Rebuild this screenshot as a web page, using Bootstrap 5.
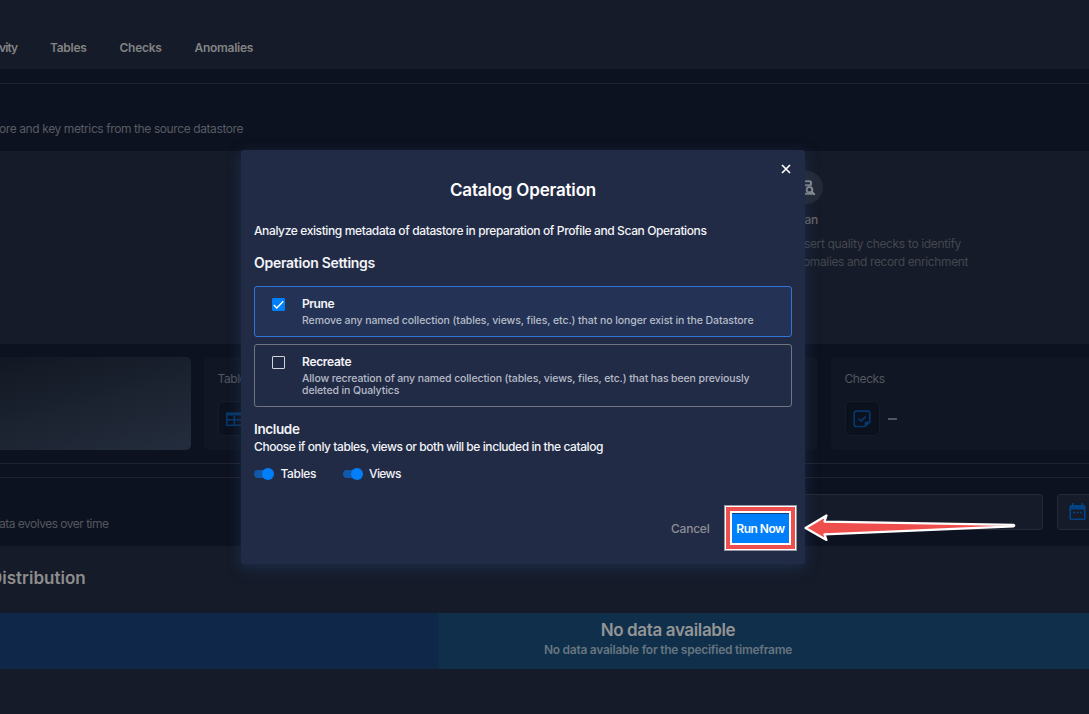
<!DOCTYPE html>
<html lang="en">
<head>
<meta charset="utf-8">
<meta name="viewport" content="width=device-width, initial-scale=1">
<title>Catalog Operation</title>
<link href="https://cdn.jsdelivr.net/npm/bootstrap@5.3.0/dist/css/bootstrap.min.css" rel="stylesheet">
<style>
  body { height: 714px; background: #0d1220; font: 400 12px/16px Inter, "Liberation Sans", sans-serif; color: #4f525a; white-space: nowrap; }
  svg { display: block; }
  .surface { background: #151b29; }
  .topnav { height: 69px; padding-top: 40px; color: #838384; font-weight: 600; letter-spacing: -.28px; }
  .topnav a { color: inherit; text-decoration: none; }
  .topnav .first { width: 51px; margin-left: -1px; letter-spacing: -.9px; }
  .intro { height: 67px; margin-top: 14px; border-top: 1px solid #1e2230; padding-top: 37px; margin-bottom: 1px; letter-spacing: -.4px; color: #585b63; }
  .intro div { margin-left: -1px; }
  .steps { height: 193px; }
  .scan { padding: 20px 0 0 790px; color: #44474e; }
  .scan-icon { width: 33px; height: 33px; background: #252a36; color: #8d9095; }
  .scan-title { margin: 7px 0 7px; line-height: 17px; color: #67686c; font-weight: 500; letter-spacing: -.2px; }
  .scan p { line-height: 18px; }
  .stats { height: 93px; margin: 13px 0; gap: 13px; }
  .stat { border-radius: 5px; background: #101624; padding: 14px 13.5px; letter-spacing: -.4px; color: #54575e; }
  .stat-lead { width: 191px; background: linear-gradient(165deg, #131924 5%, #232c3c 95%); }
  .stat-mid { width: 614px; }
  .tile { width: 35px; height: 35px; border: 1px solid #171c29; border-radius: 6px; background: #0c111e; color: #07386c; margin-top: 14px; }
  .dash { width: 9px; height: 2px; background: #53565e; margin: 14px 0 0 8px; }
  .rule { height: 15px; border-top: 1px solid #20232f; border-bottom: 1px solid #20232f; }
  .trend { height: 68px; padding-top: 16px; }
  .trend-text { width: 501px; padding-top: 22px; margin-left: -1px; letter-spacing: -.51px; color: #54575f; }
  .field { height: 36px; width: 543px; border: 1px solid #252a36; border-radius: 3px; background: #151b29; }
  .field-date { width: 60px; margin-left: 14px; padding: 8px 11px; color: #034486; }
  .dist h2 { font-size: 17px; line-height: 22px; font-weight: 600; color: #8d8d8d; margin: 0 0 0 -10px; padding-top: 21px; height: 67px; }
  .dist { height: 168px; }
  .band-a { width: 439px; height: 56px; background: #0f2849; border-right: 1px solid #102a42; }
  .band-b { height: 56px; background: #102f4a; padding: 6px 0 0; }
  .band-text { width: 458px; }
  .band-title { font-size: 17px; line-height: 22px; font-weight: 600; letter-spacing: -.37px; color: #939495; }
  .band-sub { font-weight: 600; letter-spacing: -.26px; color: #667580; line-height: 17px; }
  .dialog { left: 241px; top: 150px; width: 564px; height: 414px; border-radius: 3px; background: #222b46; color: #f2f4f7; padding: 30px 13px 0; box-shadow: 0 4px 14px rgba(35, 62, 100, .55); }
  .dialog-close { left: 539.5px; top: 13.5px; }
  .dialog h1 { font-size: 17px; line-height: 20px; font-weight: 600; letter-spacing: -.18px; margin-bottom: 23px; color: #fff; }
  .about { font-weight: 500; letter-spacing: -.383px; margin-bottom: 14px; }
  .dialog h2 { font-size: 14px; line-height: 19px; font-weight: 600; letter-spacing: -.277px; margin-bottom: 14px; }
  .choice { border: 1px solid #70757f; border-radius: 3px; padding: 9px 17px 9.5px; gap: 17px; margin-bottom: 7px; height: 63px; }
  .choice.on { background: #243355; border-color: #3274da; height: 51px; }
  .tick { width: 13px; height: 13px; border: 1px solid #d0d3da; border-radius: 1px; margin-top: 2px; }
  .on .tick { background: #007ffb; border-color: #007ffb; }
  .choice-title { font-weight: 600; letter-spacing: -.3px; }
  .on .choice-title { letter-spacing: -.45px; }
  .choice-text { font-size: 10.5px; line-height: 12px; font-weight: 500; letter-spacing: -.077px; color: #b6bbc7; margin-top: 2.5px; }
  .choice-text.alt { letter-spacing: -.109px; }
  .include { margin-top: 13px; font-weight: 500; letter-spacing: -.424px; }
  .include h3 { font-size: 13.5px; line-height: 19px; font-weight: 600; letter-spacing: -.36px; margin: 0; }
  .toggle { width: 20px; height: 12px; }
  .toggles { margin-top: 11px; letter-spacing: -.35px; }
  .toggles .item { width: 89px; gap: 6.5px; }
  .toggles .item + .item { gap: 6px; letter-spacing: -.6px; }
  .actions { margin-top: 23px; }
  .cancel { color: #8b8f98; font-weight: 500; letter-spacing: -.22px; margin: 1px 14.5px 0 0; }
  .run-frame { width: 73px; height: 46px; margin-right: -5px; border: 1px solid #9298a5; background: #fff; padding: 1px; }
  .run-frame .ring { background: #ee4f4d; padding: 4px; }
  .run-frame .inner { background: #fff; padding: 2px; }
  .run { border: 0; border-radius: 0; padding: 0; background: #007ffb; color: #fff; font-size: 12px; line-height: 16px; font-weight: 600; letter-spacing: -.5px; border-top: 1px solid #173f7d; }
  .run:hover { background: #007ffb; color: #fff; }
  .pointer { left: 799.5px; top: 508px; }
</style>
</head>
<body class="position-relative overflow-hidden">
  <nav class="topnav surface d-flex">
    <a class="first" href="#">vity</a>
    <a style="width:69.5px" href="#">Tables</a>
    <a style="width:75px" href="#">Checks</a>
    <a href="#">Anomalies</a>
  </nav>
  <div class="intro"><div>ore and key metrics from the source datastore</div></div>

  <section class="steps surface">
    <div class="scan">
      <div class="scan-icon rounded-circle d-flex align-items-center justify-content-center">
        <svg width="18" height="16" viewBox="0 0 18 16" fill="none" stroke="currentColor" stroke-width="2"><path d="M2 1.200h9.500a1.500 1.500 0 0 1 1.500 1.500v1a1.500 1.500 0 0 1-1.500 1.500H2zM2 9.500h4M2 13.500h5"/><circle cx="11.500" cy="9.800" r="2.800"/><path d="M6.500 13.800h8M13.500 11.800l3.300 3"/></svg>
      </div>
      <div class="scan-title">Scan</div>
      <p class="mb-0" style="letter-spacing:-.337px">Assert quality checks to identify</p>
      <p class="mb-0" style="letter-spacing:-.383px">anomalies and record enrichment</p>
    </div>
  </section>

  <section class="stats d-flex">
    <div class="stat stat-lead flex-shrink-0 rounded-start-0"></div>
    <div class="stat stat-mid flex-shrink-0">
      Tables
      <div class="tile d-flex align-items-center justify-content-center">
        <svg width="18" height="14" viewBox="0 0 18 14" fill="none" stroke="currentColor" stroke-width="1.6"><path d="M.8 1.5h16.4v11.700H.8zM1 7.700h16M8.300 4v9"/><path d="M0 2h18" stroke-width="3"/></svg>
      </div>
    </div>
    <div class="stat flex-grow-1 rounded-end-0">
      Checks
      <div class="d-flex align-items-center">
        <div class="tile d-flex align-items-center justify-content-center">
          <svg width="18" height="18" viewBox="0 0 18 18" fill="none" stroke="currentColor" stroke-width="1.7"><path d="M12 16.5H3A1.8 1.8 0 0 1 1.200 15V3A1.800 1.800 0 0 1 3 1.200h12A1.800 1.800 0 0 1 16.800 3v9zM5.500 8.500l2.600 2.600 4.400-4.400"/><path d="M11.500 17v-3.500a2 2 0 0 1 2-2H17z" fill="currentColor" stroke="none"/></svg>
        </div>
        <div class="dash"></div>
      </div>
    </div>
  </section>

  <div class="rule"></div>
  <section class="trend d-flex">
    <div class="trend-text flex-shrink-0">ata evolves over time</div>
    <div class="d-flex">
      <div class="field flex-shrink-0"></div>
      <div class="field field-date flex-shrink-0">
        <svg width="17" height="18" viewBox="0 0 17 18"><path fill="currentColor" fill-rule="evenodd" d="M3 0h1.500v2h8V0H14v2h1a1.600 1.600 0 0 1 1.600 1.600V15.500A1.600 1.600 0 0 1 15 17H2A1.600 1.600 0 0 1 .4 15.400V3.600A1.600 1.600 0 0 1 2 2h1zM2 6.500v9h13v-9z"/><path stroke="currentColor" stroke-width="1.600" stroke-dasharray="2 1.500" d="M4 9.500h9"/></svg>
      </div>
    </div>
  </section>

  <section class="dist surface">
    <h2>Distribution</h2>
    <div class="d-flex">
      <div class="band-a flex-shrink-0"></div>
      <div class="band-b flex-grow-1 text-center">
        <div class="band-text">
          <div class="band-title">No data available</div>
          <div class="band-sub">No data available for the specified timeframe</div>
        </div>
      </div>
    </div>
  </section>

  <div class="dialog position-absolute" role="dialog" aria-label="Catalog Operation">
    <svg class="dialog-close position-absolute" width="10" height="10" viewBox="0 0 10 10" stroke="#fff" stroke-width="1.700"><path d="M1 1l8 8M9 1l-8 8"/></svg>
    <h1 class="text-center">Catalog Operation</h1>
    <p class="about">Analyze existing metadata of datastore in preparation of Profile and Scan Operations</p>
    <h2>Operation Settings</h2>
    <div class="choice on d-flex">
      <div class="tick flex-shrink-0"><svg width="11" height="11" viewBox="0 0 11 11" fill="none" stroke="#fff" stroke-width="1.400"><path d="M.8 6l3 3L10.300 2.200"/></svg></div>
      <div>
        <div class="choice-title">Prune</div>
        <div class="choice-text">Remove any named collection (tables, views, files, etc.) that no longer exist in the Datastore</div>
      </div>
    </div>
    <div class="choice d-flex">
      <div class="tick flex-shrink-0"></div>
      <div>
        <div class="choice-title">Recreate</div>
        <div class="choice-text alt">Allow recreation of any named collection (tables, views, files, etc.) that has been previously<br>deleted in Qualytics</div>
      </div>
    </div>
    <div class="include">
      <h3>Include</h3>
      <div>Choose if only tables, views or both will be included in the catalog</div>
      <div class="toggles d-flex">
        <div class="item d-flex align-items-center"><svg class="toggle" viewBox="0 0 20 12"><rect y="2" width="16" height="8" rx="4" fill="#1159a8"/><circle cx="14" cy="6" r="6" fill="#007ffb"/></svg>Tables</div>
        <div class="item d-flex align-items-center"><svg class="toggle" viewBox="0 0 20 12"><rect y="2" width="16" height="8" rx="4" fill="#1159a8"/><circle cx="14" cy="6" r="6" fill="#007ffb"/></svg>Views</div>
      </div>
    </div>
    <div class="actions d-flex align-items-center justify-content-end">
      <span class="cancel">Cancel</span>
      <div class="run-frame"><div class="ring h-100"><div class="inner h-100"><button class="btn run w-100 h-100 d-block">Run Now</button></div></div></div>
    </div>
  </div>

  <svg class="pointer position-absolute" width="222" height="40" viewBox="0 0 222 40"><path d="M5.500 20L26.500 7.500L24.500 13.700L213.500 16.800Q215 17.500 213.500 18.300L24.500 26.300L26.500 32Z" fill="#ee4f4d" stroke="#fff" stroke-width="2.200" stroke-linejoin="round"/></svg>
  <script src="https://cdn.jsdelivr.net/npm/bootstrap@5.3.0/dist/js/bootstrap.bundle.min.js"></script>
</body>
</html>
